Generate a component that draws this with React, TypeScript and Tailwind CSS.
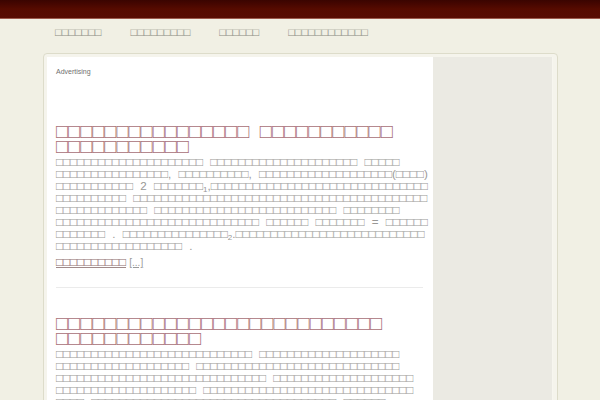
import React from "react";

// the page's text shows up as empty boxes; each word is a run of them
const b = (n: number) => "□".repeat(n);

const navItems = [b(7), b(9), b(6), b(12)];

function Title({ lines }: { lines: string[] }) {
  return (
    <h2 className="text-[20px] leading-[15px] text-[#a86e76] font-normal [word-spacing:5px]">
      {lines.map((t, i) => (
        <span key={i} className="block">{t}</span>
      ))}
    </h2>
  );
}

function Body({ lines }: { lines: React.ReactNode[] }) {
  return (
    <div className="text-[11.6px] leading-[12px] text-[#999896] [word-spacing:4px]">
      {lines.map((l, i) => (
        <p key={i} className="whitespace-nowrap h-[12px]">{l}</p>
      ))}
    </div>
  );
}

const Sub = ({ c }: { c: string }) => (
  <span className="text-[8px] leading-none relative top-[2px]">{c}</span>
);

export default function App() {
  return (
    <div className="min-h-screen bg-[#f1f0e4] font-['Liberation_Sans',sans-serif] overflow-hidden">
      {/* top bar */}
      <div className="h-[19px] bg-gradient-to-b from-[#3a0400] via-[#560b00] to-[#580c02] border-b border-[#9c5a4c]" />

      {/* nav */}
      <nav className="h-[26px] flex items-center pl-[55px] gap-[29px] text-[11px] text-[#8a8a80]">
        {navItems.map((n, i) => (
          <a key={i}>{n}</a>
        ))}
      </nav>

      {/* main box */}
      <div className="mt-[8px] ml-[43px] mr-[42px] border border-[#dddcca] rounded-t-[4px] bg-[#f5f4ec] p-[3px] pb-0 flex h-[400px]">
        <div className="w-[386px] bg-white pl-[9px] pr-[4px]">
          <p className="pt-[11px] text-[7px] leading-[8px] text-[#6f6f6f]">Advertising</p>

          <div className="mt-[48px]">
            <Title lines={[`${b(16)} ${b(11)}`, b(11)]} />
          </div>
          <div className="mt-[2px]">
            <Body
              lines={[
                `${b(21)} ${b(21)} ${b(5)}`,
                `${b(16)}, ${b(10)}, ${b(19)}(${b(4)})`,
                <>{b(11)} 2 {b(7)}<Sub c="1" />,{b(31)}</>,
                `${b(10)} ${b(42)}`,
                `${b(13)} ${b(26)} ${b(8)}`,
                `${b(29)} ${b(6)} ${b(7)} = ${b(6)}`,
                <>{b(7)} . {b(15)}<Sub c="2" />.{b(27)}</>,
                `${b(18)} .`,
              ]}
            />
          </div>
          <p className="mt-[4px] text-[11.6px] leading-[12px] h-[12px]">
            <a className="text-[#8c6a6a] underline decoration-[#a08a8a]">{b(10)}</a>{" "}
            <a className="text-[#9a9a9a] text-[10px] underline">[...]</a>
          </p>

          <div className="mt-[19px] mr-[6px] border-t border-[#ebebeb]" />

          <div className="mt-[28px]">
            <Title lines={[b(27), b(12)]} />
          </div>
          <div className="mt-[2px]">
            <Body
              lines={[
                `${b(28)} ${b(20)}`,
                `${b(19)} ${b(29)}`,
                `${b(30)} ${b(20)}`,
                `${b(20)} ${b(30)}`,
                `${b(4)} ${b(35)} ${b(6)}`,
              ]}
            />
          </div>
        </div>
        <div className="w-[120px] bg-[#ebeae3] border-r border-[#f7f6ef]" />
        <div className="flex-1" />
      </div>
    </div>
  );
}
